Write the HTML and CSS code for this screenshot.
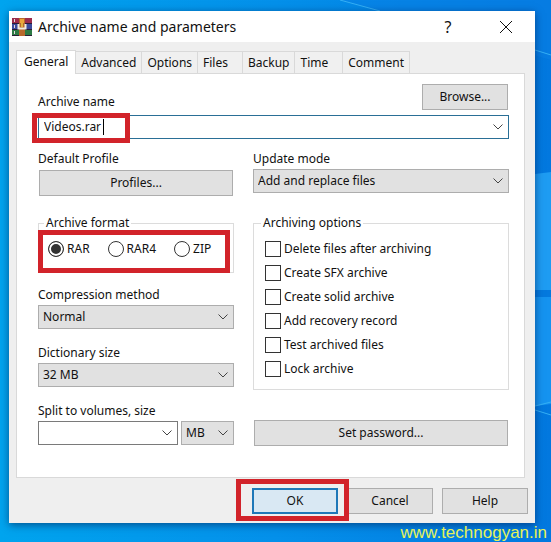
FILE: index.html
```
<!DOCTYPE html>
<html lang="en">
<head>
    <meta charset="UTF-8">
    <meta name="viewport" content="width=device-width, initial-scale=1.0">
    <title>Archive name and parameters</title>
    <link rel="stylesheet" href="styles.css">
</head>
<body>
    <svg class="wallpaper" viewBox="0 0 551 542" preserveAspectRatio="none" aria-hidden="true">
        <path d="M340 0 L551 60 V0 Z" fill="#0a7fe6" opacity="0.5"/>
        <path d="M535 174L551 172V290H535Z" fill="#1e9cf2"/>
        <path d="M535 290H551V297H535Z" fill="#0479de"/>
        <path d="M535 297H551V404L535 406Z" fill="#1593f0"/>
        <path d="M340 0L380 11M535 50L551 55M535 406L551 402M535 410L551 415" stroke="#35b0f5" fill="none"/>
    </svg>
    <form class="window">
        <header class="titlebar">
            <svg class="app-icon" viewBox="0 0 20 18">
                <rect width="20" height="6" fill="#9c2c4c"/>
                <rect y="6" width="20" height="6" fill="#3b4a9c"/>
                <rect y="12" width="20" height="6" fill="#2c7a44"/>
                <path d="M0 5.5H20M0 11.5H20M0 17.5H20" stroke="#2a1c38"/>
                <path d="M2.5 1V4M2.5 7V10M2.5 13V16" stroke="#e6d9dc"/>
                <rect x="7" width="6" height="18" fill="#b8692c"/>
                <rect x="8" y="1" width="4" height="4" fill="#eda53a"/>
                <path d="M6.5 6V10.5H13.5V6" fill="none" stroke="#f1ece0" stroke-width="2"/>
                <path d="M10 5V9" stroke="#e0b040" stroke-width="2"/>
            </svg>
            <h1 class="title">Archive name and parameters</h1>
            <button type="button" class="title-btn" aria-label="Help">?</button>
            <button type="button" class="title-btn" aria-label="Close">
                <svg class="close-icon" viewBox="0 0 12 12"><path d="M0 0L12 12M12 0L0 12"/></svg>
            </button>
        </header>

        <nav class="tabs">
            <button type="button" class="tab active">General</button>
            <button type="button" class="tab">Advanced</button>
            <button type="button" class="tab">Options</button>
            <button type="button" class="tab tab-wide">Files</button>
            <button type="button" class="tab">Backup</button>
            <button type="button" class="tab tab-wide">Time</button>
            <button type="button" class="tab">Comment</button>
        </nav>

        <main class="panel">
            <div class="name-row">
                <label for="archiveName">Archive name</label>
                <button type="button" class="btn browse">Browse...</button>
            </div>
            <div class="combo focused">
                <input type="text" id="archiveName" class="combo-input" value="Videos.rar">
                <span class="caret"></span>
                <button type="button" class="combo-arrow" aria-label="Previous names">
                    <svg class="chevron" viewBox="0 0 10 6"><path d="M0.5 0.5L5 5L9.5 0.5"/></svg>
                </button>
                <span class="marker marker-name"></span>
            </div>

            <div class="columns">
                <div class="field">
                    <label for="profiles">Default Profile</label>
                    <button type="button" class="btn" id="profiles">Profiles...</button>
                </div>
                <div class="field">
                    <label for="updateMode">Update mode</label>
                    <select id="updateMode" class="select">
                        <option>Add and replace files</option>
                    </select>
                </div>

                <div class="column">
                    <fieldset class="group formats">
                        <legend>Archive format</legend>
                        <div class="radios">
                            <label class="check"><input type="radio" name="format" checked>RAR</label>
                            <label class="check"><input type="radio" name="format">RAR4</label>
                            <label class="check"><input type="radio" name="format">ZIP</label>
                        </div>
                        <span class="marker marker-format"></span>
                    </fieldset>
                    <div class="field">
                        <label for="method">Compression method</label>
                        <select id="method" class="select">
                            <option>Normal</option>
                        </select>
                    </div>
                    <div class="field">
                        <label for="dictionary">Dictionary size</label>
                        <select id="dictionary" class="select">
                            <option>32 MB</option>
                        </select>
                    </div>
                    <div class="field">
                        <label for="volume">Split to volumes, size</label>
                        <div class="volume-row">
                            <div class="combo">
                                <input type="text" id="volume" class="combo-input">
                                <button type="button" class="combo-arrow" aria-label="Volume sizes">
                                    <svg class="chevron" viewBox="0 0 10 6"><path d="M0.5 0.5L5 5L9.5 0.5"/></svg>
                                </button>
                            </div>
                            <select class="select unit" aria-label="Volume unit">
                                <option>MB</option>
                            </select>
                        </div>
                    </div>
                </div>

                <div class="column">
                    <fieldset class="group">
                        <legend>Archiving options</legend>
                        <label class="check"><input type="checkbox">Delete files after archiving</label>
                        <label class="check"><input type="checkbox">Create SFX archive</label>
                        <label class="check"><input type="checkbox">Create solid archive</label>
                        <label class="check"><input type="checkbox">Add recovery record</label>
                        <label class="check"><input type="checkbox">Test archived files</label>
                        <label class="check"><input type="checkbox">Lock archive</label>
                    </fieldset>
                    <button type="button" class="btn password">Set password...</button>
                </div>
            </div>
        </main>

        <footer class="actions">
            <div class="ok-wrap">
                <button type="button" class="btn ok">OK</button>
                <span class="marker marker-ok"></span>
            </div>
            <button type="button" class="btn">Cancel</button>
            <button type="button" class="btn">Help</button>
        </footer>
    </form>
    <div class="watermark">www.technogyan.in</div>
</body>
</html>
```
FILE: styles.css
```
* {
    box-sizing: border-box;
}
body {
    margin: 0;
    padding: 11px 16px 19px 9px;
    min-height: 100vh;
    position: relative;
    background: linear-gradient(90deg, #00a4ee 0%, #0490ea 50%, #0278df 100%);
    font-family: "Noto Sans", "DejaVu Sans Condensed", sans-serif;
    font-size: 12px;
    line-height: 16px;
    color: #111;
}
button, input, select {
    font: inherit;
    color: inherit;
    margin: 0;
}
.wallpaper {
    position: absolute;
    top: 0;
    left: 0;
    width: 100%;
    height: 100%;
}
.window {
    position: relative;
    background-color: #efefef;
    box-shadow: 0 2px 8px rgba(0, 30, 80, 0.6);
}
.titlebar {
    display: flex;
    align-items: center;
    height: 31px;
    padding-left: 3px;
    background-color: #fff;
}
.app-icon {
    width: 20px;
    height: 18px;
}
.title {
    flex: 1;
    margin: 0 0 0 6px;
    font-size: 14px;
    font-weight: normal;
}
.title-btn {
    width: 58px;
    height: 31px;
    padding: 0;
    border: none;
    background: none;
    font-size: 16px;
}
.close-icon {
    width: 12px;
    height: 12px;
    display: block;
    margin: 0 auto;
    stroke: #111;
}
.tabs {
    display: flex;
    align-items: flex-end;
    height: 31px;
    padding-left: 7px;
}
.tab {
    height: 22px;
    padding: 0 5px;
    border: 1px solid #d9d9d9;
    border-width: 1px 1px 0 0;
    background-color: #f0f0f0;
}
.tab-wide {
    padding-right: 14px;
}
.tab.active {
    position: relative;
    z-index: 1;
    height: 24px;
    margin-bottom: -1px;
    padding: 0 7px 2px;
    border-left-width: 1px;
    background-color: #fff;
}
.panel {
    margin: 0 10px 0 7px;
    padding: 10px 15px 31px 21px;
    border: 1px solid #d9d9d9;
    background-color: #fff;
}
.name-row {
    display: flex;
    justify-content: space-between;
    align-items: flex-end;
    margin-bottom: 5px;
}
.btn {
    height: 26px;
    margin: 0 1px;
    padding: 0 8px;
    border: 1px solid #adadad;
    background-color: #e1e1e1;
}
.browse {
    width: 86px;
}
.combo {
    position: relative;
    flex: 1;
    min-width: 0;
    display: flex;
    align-items: center;
    height: 24px;
    border: 1px solid #7a7a7a;
    background-color: #fff;
}
.combo.focused {
    border-color: #2a6f96;
}
.combo-input {
    flex: 1;
    min-width: 0;
    padding: 0 5px;
    border: none;
    outline: none;
    background: none;
}
.focused .combo-input {
    flex: none;
    width: 64px;
    padding-right: 0;
}
.caret {
    width: 1px;
    height: 16px;
    background-color: #000;
}
.combo-arrow {
    margin-left: auto;
    padding: 0 5px;
    border: none;
    background: none;
}
.chevron {
    display: block;
    width: 10px;
    height: 6px;
    fill: none;
    stroke: #444;
}
.columns {
    display: grid;
    grid-template-columns: minmax(0, 196fr) minmax(0, 256fr);
    gap: 18px 19px;
    margin-top: 12px;
}
.field {
    display: flex;
    flex-direction: column;
    gap: 2px;
}
.field > .btn {
    margin: 1px;
}
.select {
    appearance: none;
    width: 100%;
    height: 24px;
    padding: 0 4px;
    border: 1px solid #adadad;
    border-radius: 0;
    background: #e1e1e1 url("data:image/svg+xml,%3Csvg xmlns='http://www.w3.org/2000/svg' width='10' height='6'%3E%3Cpath d='M0.5 0.5L5 5L9.5 0.5' fill='none' stroke='%23444'/%3E%3C/svg%3E") no-repeat right 5px center;
}
.column {
    display: flex;
    flex-direction: column;
    gap: 16px;
}
.group {
    position: relative;
    min-width: 0;
    margin: 0;
    padding: 6px 11px 8px;
    border: 1px solid #dcdcdc;
}
.group legend {
    margin-left: -4px;
    padding: 0 2px;
}
.formats {
    padding: 6px 9px 11px;
    margin-bottom: -2px;
}
.radios {
    display: flex;
    gap: 18px;
}
.check {
    display: flex;
    align-items: center;
    gap: 3px;
    height: 24px;
}
.check input {
    appearance: none;
    width: 16px;
    height: 16px;
    border: 1px solid #333;
    background-color: #fff;
}
.check input[type="radio"] {
    border-radius: 50%;
}
.check input[type="radio"]:checked {
    background-color: #333;
    box-shadow: inset 0 0 0 2px #fff;
}
.password {
    margin-top: 14px;
}
.volume-row {
    display: flex;
    gap: 3px;
}
.volume-row .unit {
    flex: none;
    width: 53px;
}
.actions {
    display: flex;
    justify-content: flex-end;
    gap: 9px;
    padding: 10px 7px 9px 0;
}
.actions .btn {
    width: 86px;
    margin: 0;
}
.ok-wrap {
    position: relative;
}
.actions .ok {
    border: 2px solid #1f78b8;
    background-color: #d9e8f3;
}
/* red frames around the highlighted controls */
.marker {
    position: absolute;
    border: 5px solid #d2232a;
    pointer-events: none;
}
.marker-name {
    top: -3px;
    left: -7px;
    width: 98px;
    height: 30px;
}
.marker-format {
    top: -1px;
    left: -1px;
    right: 3px;
    height: 43px;
}
.marker-ok {
    top: -9px;
    left: -16px;
    right: -11px;
    bottom: -7px;
}
.watermark {
    position: absolute;
    right: 4px;
    bottom: 0;
    font-family: "Liberation Sans", Arial, sans-serif;
    font-size: 17px;
    line-height: 18px;
    color: #e6f25a;
}
```
